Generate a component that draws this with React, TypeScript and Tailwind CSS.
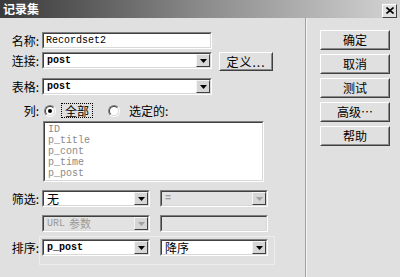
import React from "react";

const CJK = { fontFamily: '"SimSun","Noto Sans CJK SC","Noto Sans",sans-serif' };
const MONO = { fontFamily: '"Liberation Mono","DejaVu Sans Mono",monospace' };

function Arrow({ disabled }: { disabled?: boolean }) {
  return (
    <svg width="7" height="4" viewBox="0 0 7 4">
      <path d="M0 0h7L3.5 4z" fill={disabled ? "#a0a0a0" : "#000"} />
    </svg>
  );
}

function Sunken({ w, h = 17, bg = "bg-white", children }: { w: string; h?: number; bg?: string; children?: React.ReactNode }) {
  return (
    <div
      className={`${w} border border-t-[#808080] border-l-[#808080] border-b-white border-r-white`}
      style={{ height: h }}
    >
      <div className={`h-full w-full border border-t-[#404040] border-l-[#404040] border-b-[#d8d8d8] border-r-[#d8d8d8] ${bg} flex items-center`}>
        {children}
      </div>
    </div>
  );
}

function Select({ w, text, disabled, mono = true, bold = true }: { w: string; text?: string; disabled?: boolean; mono?: boolean; bold?: boolean }) {
  return (
    <Sunken w={w} bg={disabled ? "bg-[#e2e2e2]" : "bg-white"}>
      <div
        className={`flex-1 pl-[3px] text-[10px] leading-none ${disabled ? "text-[#9a9a9a]" : "text-black"} ${bold && mono ? "font-bold" : ""}`}
        style={mono ? MONO : { ...CJK, fontSize: 12 }}
      >
        {text}
      </div>
      <div className="h-full w-[14px] bg-[#d6d6d6] border border-t-[#f4f4f4] border-l-[#f4f4f4] border-b-[#404040] border-r-[#404040] flex items-center justify-center">
        <Arrow disabled={disabled} />
      </div>
    </Sunken>
  );
}

function Label({ children }: { children: React.ReactNode }) {
  return (
    <div className="w-[40px] text-right text-[12px] leading-none text-black pr-[1px]" style={CJK}>
      {children}
    </div>
  );
}

function Button({ children, w = "w-[70px]", h = "h-[20px]" }: { children: React.ReactNode; w?: string; h?: string }) {
  return (
    <div className={`${w} ${h} border border-t-white border-l-white border-b-[#404040] border-r-[#404040] bg-[#e0e0e0]`}>
      <div className="h-full w-full border border-transparent border-b-[#8a8a8a] border-r-[#8a8a8a] flex items-center justify-center text-[12px] text-black leading-none" style={CJK}>
        {children}
      </div>
    </div>
  );
}

function Radio({ checked }: { checked?: boolean }) {
  return (
    <div className="w-[12px] h-[12px] rounded-full border border-t-[#808080] border-l-[#808080] border-b-white border-r-white">
      <div className="w-full h-full rounded-full bg-white border border-t-[#404040] border-l-[#404040] border-b-[#d8d8d8] border-r-[#d8d8d8] flex items-center justify-center">
        {checked && <div className="w-[4px] h-[4px] rounded-full bg-black" />}
      </div>
    </div>
  );
}

export default function App() {
  const items = ["ID", "p_title", "p_cont", "p_time", "p_post"];
  return (
    <div className="relative w-[400px] h-[277px] bg-[#e0e0e0] flex flex-col overflow-hidden">
      <div className="h-[18px] flex items-center justify-between bg-gradient-to-r from-[#3a3a3a] via-[#8a8a8a] to-[#d4d4d4]">
        <div className="pl-[3px] text-[12px] font-bold text-white leading-none" style={CJK}>
          记录集
        </div>
        <div className="mr-[3px] mt-[3px] w-[15px] h-[14px] border border-t-white border-l-white border-b-[#404040] border-r-[#404040] bg-[#e0e0e0] flex items-center justify-center">
          <svg width="8" height="7" viewBox="0 0 8 7">
            <path d="M0.5 0.5L7.5 6.5M7.5 0.5L0.5 6.5" stroke="#000" strokeWidth="1.6" />
          </svg>
        </div>
      </div>
      <div className="flex flex-1">
        <div className="w-[305px] flex flex-col pt-[14px]">
          <div className="flex items-center gap-[2px] h-[17px]">
            <Label>名称:</Label>
            <Sunken w="w-[170px]">
              <div className="pl-[2px] text-[10px] leading-none text-black" style={MONO}>
                Recordset2
              </div>
            </Sunken>
          </div>
          <div className="flex items-start gap-[2px] h-[19px] mt-[3px]">
            <div className="h-[17px] flex items-center">
              <Label>连接:</Label>
            </div>
            <Select w="w-[170px]" text="post" />
            <div className="ml-[5px]">
              <Button w="w-[54px]" h="h-[19px]">
                <span className="tracking-[1px]">定义...</span>
              </Button>
            </div>
          </div>
          <div className="flex items-center gap-[2px] h-[17px] mt-[7px]">
            <Label>表格:</Label>
            <Select w="w-[170px]" text="post" />
          </div>
          <div className="flex items-center h-[15px] mt-[8px]">
            <Label>列:</Label>
            <div className="ml-[4px]">
              <Radio checked />
            </div>
            <div className="ml-[5px] h-[15px] px-[3px] border border-dotted border-black flex items-center text-[12px] leading-none" style={CJK}>
              全部
            </div>
            <div className="ml-[15px]">
              <Radio />
            </div>
            <div className="ml-[9px] text-[12px] leading-none" style={CJK}>
              选定的:
            </div>
          </div>
          <div className="ml-[43px] mt-[3px]">
            <div className="w-[221px] h-[61px] border border-t-[#808080] border-l-[#808080] border-b-white border-r-white">
              <div className="h-full w-full border border-t-[#404040] border-l-[#404040] border-b-[#d8d8d8] border-r-[#d8d8d8] bg-white pl-[3px] pt-[1px] overflow-hidden">
                {items.map((t) => (
                  <div key={t} className="text-[10px] leading-[11px] h-[11px] text-[#8a8a8a]" style={MONO}>
                    {t}
                  </div>
                ))}
              </div>
            </div>
          </div>
          <div className="flex items-center gap-[2px] h-[17px] mt-[8px]">
            <Label>筛选:</Label>
            <Select w="w-[108px]" text="无" mono={false} />
            <div className="ml-[8px]">
              <Select w="w-[108px]" text="=" disabled />
            </div>
          </div>
          <div className="flex items-center gap-[2px] h-[17px] mt-[8px]">
            <div className="w-[40px]" />
            <Sunken w="w-[108px]" bg="bg-[#e2e2e2]">
              <div className="flex-1 pl-[3px] flex items-center gap-[4px] text-[#9a9a9a] leading-none">
                <span className="text-[10px]" style={MONO}>URL</span>
                <span className="text-[11px]" style={CJK}>参数</span>
              </div>
              <div className="h-full w-[14px] bg-[#d6d6d6] border border-t-[#f4f4f4] border-l-[#f4f4f4] border-b-[#404040] border-r-[#404040] flex items-center justify-center">
                <Arrow disabled />
              </div>
            </Sunken>
            <div className="ml-[8px]">
              <Sunken w="w-[108px]" bg="bg-[#e2e2e2]" />
            </div>
          </div>
          <div className="flex items-center gap-[2px] h-[17px] mt-[7px]">
            <Label>排序:</Label>
            <Select w="w-[108px]" text="p_post" />
            <div className="ml-[8px]">
              <Select w="w-[108px]" text="降序" mono={false} />
            </div>
          </div>
        </div>
        <div className="w-[2px] border-l border-l-[#a0a0a0] border-r border-r-[#f4f4f4]" />
        <div className="flex flex-col gap-[4px] pl-[13px] pt-[12px]">
          <Button>确定</Button>
          <Button>取消</Button>
          <Button>测试</Button>
          <Button>高级…</Button>
          <Button>帮助</Button>
        </div>
      </div>
      <div className="pointer-events-none absolute left-[39px] top-[236px] w-[236px] h-[29px] border border-[#ededed]" />
    </div>
  );
}
